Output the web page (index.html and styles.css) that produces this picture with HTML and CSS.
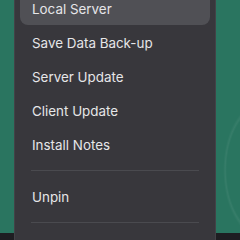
FILE: index.html
```html
<!DOCTYPE html>
<html lang="en">
  <head>
    <meta charset="UTF-8" />
    <meta name="viewport" content="width=device-width, initial-scale=1.0" />
    <title>App Menu</title>
    <link rel="stylesheet" href="styles.css">
  </head>

  <body>
    <div class="screen">
      <!-- Context menu -->
      <div class="context-menu">
        <div class="menu-item active">Local Server</div>
        <div class="menu-item">Save Data Back-up</div>
        <div class="menu-item">Server Update</div>
        <div class="menu-item">Client Update</div>
        <div class="menu-item">Install Notes</div>
        <div class="menu-separator"></div>
        <div class="menu-item">Unpin</div>
        <div class="menu-separator"></div>
      </div>

      <div class="dock"></div>
    </div>
  </body>
</html>
```

FILE: styles.css
```css
* {
  margin: 0;
  padding: 0;
  box-sizing: border-box;
}

body {
  font-family: Inter, "Noto Sans", sans-serif;
  background-color: #2a7560;
  width: 240px;
  height: 240px;
  overflow: hidden;
}

.screen {
  display: grid;
  grid-template-columns: 14px 202px 1fr;
  grid-template-rows: 233px 7px;
  height: 240px;
  background:
    radial-gradient(ellipse 40px 70px at 262px 170px, transparent 88%, rgba(255, 255, 255, 0.06) 92%, transparent 97%),
    #2a7560;
}

.dock {
  grid-column: 1 / 4;
  grid-row: 2;
  background-color: #1e1e22;
}

.context-menu {
  grid-column: 2;
  grid-row: 1 / 3;
  z-index: 1;
  margin-top: -13px;
  height: 270px;
  background-color: #38373c;
  border: 1px solid #434247;
  border-radius: 12px;
  padding: 5px;
  color: #e6e6e8;
  font-size: 13.4px;
}

.menu-item {
  height: 32px;
  line-height: 32px;
  padding: 0 12px;
  margin-bottom: 2px;
  border-radius: 8px;
  white-space: nowrap;
}

.menu-item.active {
  background-color: #505055;
}

/* margins collapse with the item margins around them */
.menu-separator {
  height: 1px;
  background-color: #4a4a4f;
  margin: 9px 11px 10px;
}
```
